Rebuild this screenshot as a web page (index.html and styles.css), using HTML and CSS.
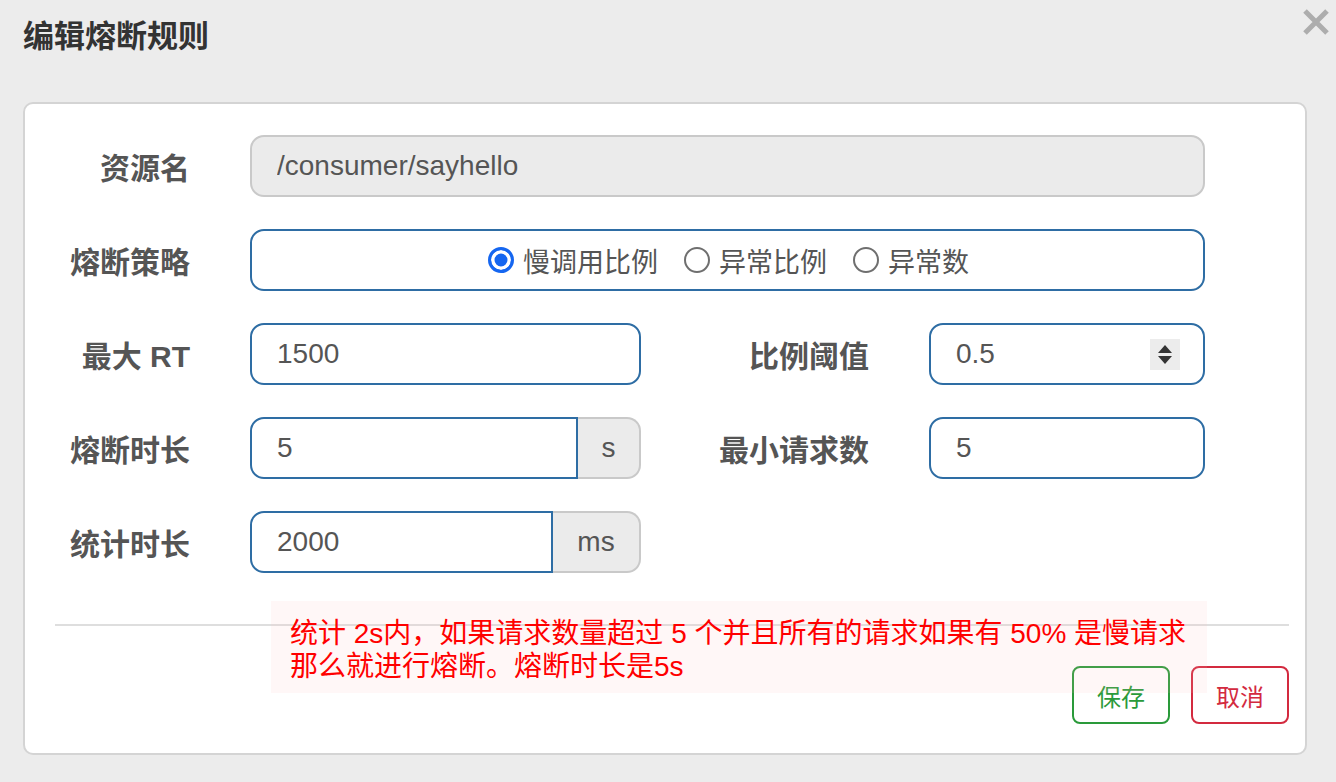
FILE: index.html
```html
<!DOCTYPE html>
<html lang="zh-CN">
<head>
  <meta charset="UTF-8">
  <meta name="viewport" content="width=device-width, initial-scale=1.0">
  <title>编辑熔断规则</title>
  <link rel="stylesheet" href="styles.css">
</head>
<body>
  <div class="modal-header">
    <h4 class="modal-title">编辑熔断规则</h4>
    <button class="close" type="button" aria-label="关闭">
      <svg width="28" height="28" viewBox="0 0 28 28"><path d="M3 3 L25 25 M25 3 L3 25" stroke="#adadad" stroke-width="5"/></svg>
    </button>
  </div>

  <div class="panel">
    <!-- Formulario de la regla -->
    <form class="form-grid">
      <label>资源名</label>
      <input class="form-control readonly wide" type="text" value="/consumer/sayhello" readonly>

      <label>熔断策略</label>
      <div class="radio-box wide">
        <span class="radio-item"><span class="radio checked"></span>慢调用比例</span>
        <span class="radio-item"><span class="radio"></span>异常比例</span>
        <span class="radio-item"><span class="radio"></span>异常数</span>
      </div>

      <label>最大 RT</label>
      <input class="form-control" type="text" value="1500">
      <label>比例阈值</label>
      <div class="spin-field">
        <input class="form-control" type="text" value="0.5">
        <span class="spinner"></span>
      </div>

      <label>熔断时长</label>
      <div class="input-group">
        <input class="form-control" type="text" value="5">
        <span class="addon">s</span>
      </div>
      <label>最小请求数</label>
      <input class="form-control" type="text" value="5">

      <label>统计时长</label>
      <div class="input-group">
        <input class="form-control" type="text" value="2000">
        <span class="addon addon-ms">ms</span>
      </div>
    </form>

    <hr class="divider">

    <div class="footer">
      <button class="btn btn-save" type="button">保存</button>
      <button class="btn btn-cancel" type="button">取消</button>
    </div>

    <!-- Nota sobre la regla -->
    <div class="note">统计 2s内，如果请求数量超过 5 个并且所有的请求如果有 50% 是慢请求<br>那么就进行熔断。熔断时长是5s</div>
  </div>
</body>
</html>
```

FILE: styles.css
```css
body {
  margin: 0;
  background-color: #ececec;
  font-family: "Liberation Sans", "Noto Sans CJK SC", sans-serif;
  color: #555;
}
.modal-header {
  display: flex;
  justify-content: space-between;
  align-items: flex-start;
  height: 83px;
  padding: 19px 6px 0 23px;
}
.modal-title {
  margin: 0;
  font-size: 31px;
  line-height: 36px;
  font-weight: bold;
  color: #333;
}
.close {
  margin-top: -11px;
  padding: 0;
  border: 0;
  background: none;
  line-height: 0;
}
.panel {
  position: relative;
  margin: 0 29px 0 23px;
  padding: 31px 16px 29px 15px;
  background-color: #fff;
  border: 2px solid #d4d4d4;
  border-radius: 10px;
}
.form-grid {
  display: grid;
  grid-template-columns: 150px 391px 168px 276px;
  grid-auto-rows: 62px;
  column-gap: 60px;
  row-gap: 32px;
  margin: 0;
}
.form-grid label {
  align-self: center;
  text-align: right;
  font-size: 30px;
  font-weight: bold;
  color: #555;
  white-space: nowrap;
}
.wide {
  grid-column: 2 / 5;
}
.form-control {
  box-sizing: border-box;
  width: 100%;
  height: 62px;
  margin: 0;
  padding: 0 25px;
  font-family: "Liberation Sans", "Noto Sans CJK SC", sans-serif;
  font-size: 28px;
  color: #555;
  background-color: #fff;
  border: 2px solid #2e6da4;
  border-radius: 14px;
  outline: none;
}
.form-control.readonly {
  background-color: #ebebeb;
  border-color: #c9c9c9;
}
.radio-box {
  box-sizing: border-box;
  display: flex;
  justify-content: center;
  align-items: center;
  gap: 26px;
  padding-left: 2px;
  border: 2px solid #2e6da4;
  border-radius: 14px;
  font-size: 27px;
  color: #555;
}
.radio-item {
  display: inline-flex;
  align-items: center;
  gap: 9px;
}
.radio {
  box-sizing: border-box;
  width: 26px;
  height: 26px;
  border: 2px solid #6f6f6f;
  border-radius: 50%;
  background-color: #fff;
}
.radio.checked {
  border: 3.5px solid #1566f0;
  background-color: #1566f0;
  box-shadow: inset 0 0 0 3.5px #fff;
}
.spin-field {
  position: relative;
}
.spinner {
  position: absolute;
  right: 25px;
  top: 16px;
  width: 30px;
  height: 31px;
  background-color: #ececec;
}
.spinner::before,
.spinner::after {
  content: "";
  position: absolute;
  left: 8px;
  border-left: 7px solid transparent;
  border-right: 7px solid transparent;
}
.spinner::before {
  top: 6px;
  border-bottom: 8px solid #333;
}
.spinner::after {
  bottom: 6px;
  border-top: 8px solid #333;
}
.input-group {
  display: flex;
}
.input-group .form-control {
  flex: 1;
  min-width: 0;
  border-radius: 14px 0 0 14px;
}
.addon {
  box-sizing: border-box;
  display: flex;
  justify-content: center;
  align-items: center;
  flex: 0 0 63px;
  height: 62px;
  font-size: 28px;
  color: #555;
  background-color: #ebebeb;
  border: 2px solid #c9c9c9;
  border-left: 0;
  border-radius: 0 14px 14px 0;
}
.addon-ms {
  flex-basis: 88px;
}
.divider {
  margin: 51px 0 0 15px;
  border: 0;
  border-top: 2px solid #dedede;
}
.footer {
  display: flex;
  justify-content: flex-end;
  gap: 21px;
  margin-top: 40px;
}
.btn {
  width: 98px;
  height: 58px;
  padding: 0;
  font-family: "Noto Sans CJK SC", sans-serif;
  font-size: 24px;
  background-color: #fff;
  border: 2px solid;
  border-radius: 8px;
}
.btn-save {
  color: #2a9a3a;
  border-color: #2a9a3a;
}
.btn-cancel {
  color: #d32a3f;
  border-color: #d32a3f;
}
.note {
  position: absolute;
  left: 246px;
  top: 497px;
  box-sizing: border-box;
  width: 936px;
  height: 92px;
  padding: 16px 19px;
  font-size: 28px;
  line-height: 33px;
  color: #ff0000;
  background-color: rgba(255, 190, 190, 0.12);
  white-space: nowrap;
}
```
